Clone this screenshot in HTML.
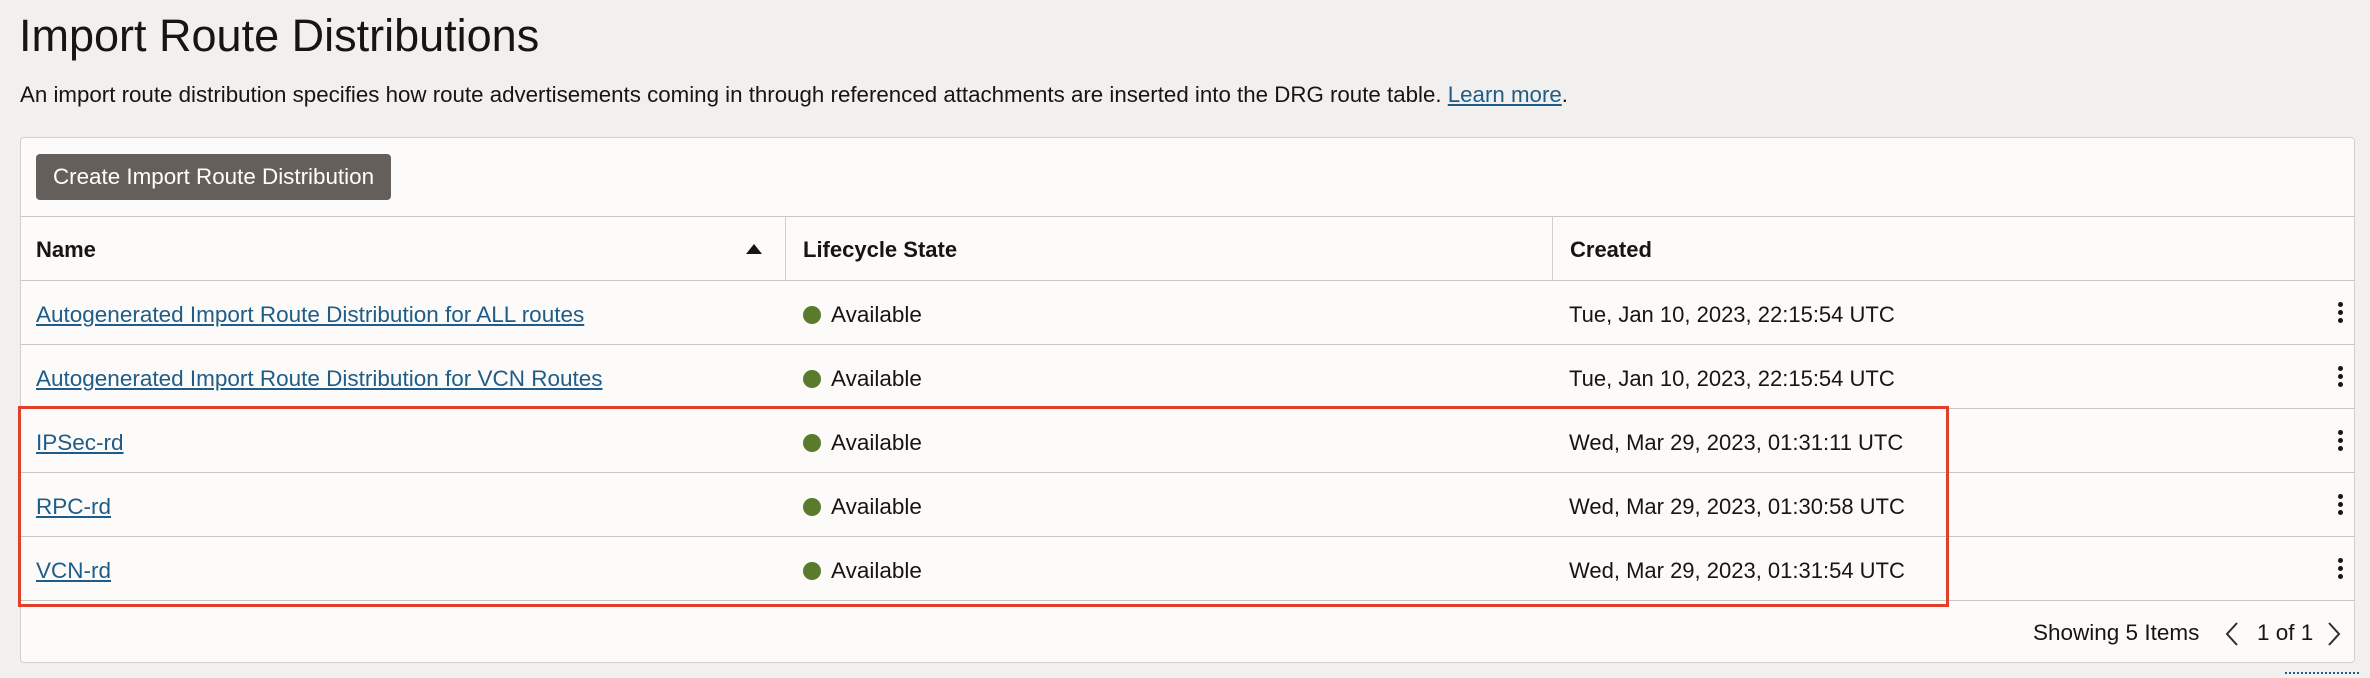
<!DOCTYPE html>
<html><head><meta charset="utf-8"><style>
body{margin:0;width:2370px;height:678px;background:#f1f0ee;font-family:"Liberation Sans",sans-serif;color:#161513;position:relative;overflow:hidden}
.a{position:absolute;white-space:nowrap}
h1{position:absolute;left:19px;top:10px;margin:0;font-weight:normal;font-size:45px}
.desc{left:20px;top:82px;font-size:22.3px}
a{color:#1f5c87;text-decoration:underline}
.panel{position:absolute;left:20px;top:137px;width:2335px;height:526px;background:#fcfbfa;border:1px solid #d2d0cd;border-radius:4px;box-sizing:border-box}
.btn{left:36px;top:154px;width:355px;height:46px;background:#655f5b;border-radius:4px;color:#fff;font-size:22.4px;line-height:46px;text-align:center}
.hl{position:absolute;left:21px;width:2333px;height:1px;background:#c9c6c2}
.vl{position:absolute;top:216px;height:64px;width:1px;background:#d2d0cd}
.th{font-size:22px;font-weight:bold;top:237px}
.td{font-size:22.5px}
.dt{font-size:22px}
.dot{position:absolute;width:18px;height:18px;border-radius:50%;background:#5b7b2c}
.keb{position:absolute;left:2338px;width:5px}
.keb i{display:block;width:5px;height:5px;border-radius:50%;background:#161513;margin-bottom:3px}
</style></head><body>
<h1>Import Route Distributions</h1>
<div class="a desc">An import route distribution specifies how route advertisements coming in through referenced attachments are inserted into the DRG route table. <a>Learn more</a>.</div>
<div class="panel"></div>
<div class="a btn">Create Import Route Distribution</div>
<div class="hl" style="top:216px"></div>
<div class="hl" style="top:280px"></div>
<div class="hl" style="top:344px"></div>
<div class="hl" style="top:408px"></div>
<div class="hl" style="top:472px"></div>
<div class="hl" style="top:536px"></div>
<div class="hl" style="top:600px"></div>
<div class="vl" style="left:785px"></div>
<div class="vl" style="left:1552px"></div>
<div class="a th" style="left:36px">Name</div>
<div class="a" style="left:746px;top:244px;width:0;height:0;border-left:8px solid transparent;border-right:8px solid transparent;border-bottom:10px solid #161513"></div>
<div class="a th" style="left:803px">Lifecycle State</div>
<div class="a th" style="left:1570px">Created</div>

<div class="a td" style="left:36px;top:302px"><a>Autogenerated Import Route Distribution for ALL routes</a></div>
<div class="a td" style="left:36px;top:366px"><a>Autogenerated Import Route Distribution for VCN Routes</a></div>
<div class="a td" style="left:36px;top:430px"><a>IPSec-rd</a></div>
<div class="a td" style="left:36px;top:494px"><a>RPC-rd</a></div>
<div class="a td" style="left:36px;top:558px"><a>VCN-rd</a></div>

<div class="dot" style="left:803px;top:306px"></div><div class="a td" style="left:831px;top:302px">Available</div>
<div class="dot" style="left:803px;top:370px"></div><div class="a td" style="left:831px;top:366px">Available</div>
<div class="dot" style="left:803px;top:434px"></div><div class="a td" style="left:831px;top:430px">Available</div>
<div class="dot" style="left:803px;top:498px"></div><div class="a td" style="left:831px;top:494px">Available</div>
<div class="dot" style="left:803px;top:562px"></div><div class="a td" style="left:831px;top:558px">Available</div>

<div class="a dt" style="left:1569px;top:302px">Tue, Jan 10, 2023, 22:15:54 UTC</div>
<div class="a dt" style="left:1569px;top:366px">Tue, Jan 10, 2023, 22:15:54 UTC</div>
<div class="a dt" style="left:1569px;top:430px">Wed, Mar 29, 2023, 01:31:11 UTC</div>
<div class="a dt" style="left:1569px;top:494px">Wed, Mar 29, 2023, 01:30:58 UTC</div>
<div class="a dt" style="left:1569px;top:558px">Wed, Mar 29, 2023, 01:31:54 UTC</div>

<div class="keb" style="top:302px"><i></i><i></i><i></i></div>
<div class="keb" style="top:366px"><i></i><i></i><i></i></div>
<div class="keb" style="top:430px"><i></i><i></i><i></i></div>
<div class="keb" style="top:494px"><i></i><i></i><i></i></div>
<div class="keb" style="top:558px"><i></i><i></i><i></i></div>

<div class="a" style="left:18px;top:406px;width:1931px;height:201px;border:3px solid #e2402b;box-sizing:border-box"></div>

<div class="a td" style="left:2033px;top:620px">Showing 5 Items</div>
<svg class="a" style="left:2224px;top:621px" width="16" height="26" viewBox="0 0 16 26"><path d="M13 2 L3 13 L13 24" fill="none" stroke="#312d2a" stroke-width="2"/></svg>
<div class="a td" style="left:2257px;top:620px">1 of 1</div>
<svg class="a" style="left:2326px;top:621px" width="16" height="26" viewBox="0 0 16 26"><path d="M3 2 L13 13 L3 24" fill="none" stroke="#312d2a" stroke-width="2"/></svg>
<div class="a" style="left:2285px;top:672px;width:74px;border-top:2px dotted #1f5c87"></div>
</body></html>
